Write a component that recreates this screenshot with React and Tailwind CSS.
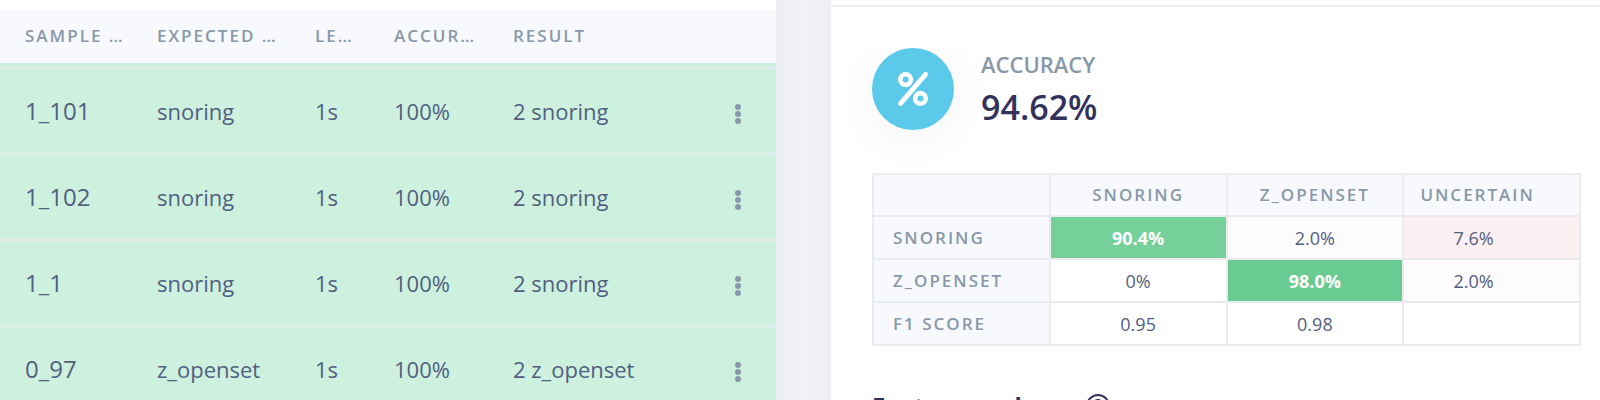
const samples = [
  { name: '1_101', expected: 'snoring', length: '1s', accuracy: '100%', result: '2 snoring' },
  { name: '1_102', expected: 'snoring', length: '1s', accuracy: '100%', result: '2 snoring' },
  { name: '1_1', expected: 'snoring', length: '1s', accuracy: '100%', result: '2 snoring' },
  { name: '0_97', expected: 'z_openset', length: '1s', accuracy: '100%', result: '2 z_openset' },
];

const columns = ['SAMPLE …', 'EXPECTED …', 'LE…', 'ACCUR…', 'RESULT'];

const sampleCell = 'whitespace-nowrap border-t-2 border-[#e5ebec] p-0 pl-[25px]';

function SampleTable() {
  return (
    <table className="w-full table-fixed border-separate border-spacing-0 text-left">
      <colgroup>
        <col className="w-[132px]" />
        <col className="w-[158px]" />
        <col className="w-[79px]" />
        <col className="w-[119px]" />
        <col />
        <col className="w-[100px]" />
      </colgroup>
      <thead>
        <tr className="h-[53px] bg-[#f7f9fd] text-[17px] font-semibold tracking-[2px] text-[#8898aa]">
          {columns.map((c) => (
            <th key={c} scope="col" className="whitespace-nowrap p-0 pb-0.5 pl-[25px] font-semibold">
              {c}
            </th>
          ))}
          <td className="p-0" />
        </tr>
      </thead>
      <tbody className="bg-[#cdf0df] text-[22px] text-[#525f7f]">
        <tr className="h-1 bg-[#caf1dd]">
          <td colSpan={6} className="p-0" />
        </tr>
        {samples.map((s) => (
          <tr key={s.name} className="h-[86px]">
            <td className={`${sampleCell} text-2xl`}>{s.name}</td>
            <td className={sampleCell}>{s.expected}</td>
            <td className={sampleCell}>{s.length}</td>
            <td className={sampleCell}>{s.accuracy}</td>
            <td className={sampleCell}>{s.result}</td>
            <td className="border-t-2 border-[#e5ebec] p-0 pr-7 align-middle">
              <button type="button" aria-label="Actions" className="ml-auto flex w-5 justify-center pt-1.5">
                <svg width="6" height="20" viewBox="0 0 6 20" fill="#8898aa">
                  <circle cx="3" cy="3" r="3" />
                  <circle cx="3" cy="10" r="3" />
                  <circle cx="3" cy="17" r="3" />
                </svg>
              </button>
            </td>
          </tr>
        ))}
      </tbody>
    </table>
  );
}

const cell = 'h-[43px] border-2 border-[#e9ecef] p-0 text-center';
const head = 'border-2 border-[#e9ecef] bg-[#f7f9fd] p-0 text-[17px] font-semibold tracking-[2px] text-[#8898aa]';

function ConfusionMatrix() {
  return (
    <table className="w-full table-fixed border-collapse text-lg leading-6 text-[#525f7f]">
      <thead>
        <tr className="h-[42px]">
          <td className={head} />
          <th scope="col" className={head}>SNORING</th>
          <th scope="col" className={head}>Z_OPENSET</th>
          <th scope="col" className={`${head} pr-7`}>UNCERTAIN</th>
        </tr>
      </thead>
      <tbody>
        <tr>
          <th scope="row" className={`${head} pl-[19px] text-left`}>SNORING</th>
          <td className={`${cell} bg-[#76d09a] font-bold text-white`}>90.4%</td>
          <td className={`${cell} bg-[#fefbfc]`}>2.0%</td>
          <td className={`${cell} bg-[#fdf0f2] pr-9`}>7.6%</td>
        </tr>
        <tr>
          <th scope="row" className={`${head} pl-[19px] text-left`}>Z_OPENSET</th>
          <td className={cell}>0%</td>
          <td className={`${cell} bg-[#69cb92] font-bold text-white`}>98.0%</td>
          <td className={`${cell} bg-[#fefbfc] pr-9`}>2.0%</td>
        </tr>
        <tr>
          <th scope="row" className={`${head} pl-[19px] text-left`}>F1 SCORE</th>
          <td className={cell}>0.95</td>
          <td className={cell}>0.98</td>
          <td className={cell} />
        </tr>
      </tbody>
    </table>
  );
}

export default function App() {
  return (
    <div className="flex h-screen overflow-hidden bg-[#f0f2f7] font-['Open_Sans',sans-serif]">
      <section className="w-[48.5%] bg-white pt-[10px]">
        <SampleTable />
      </section>
      <div className="w-[55px] shrink-0 bg-linear-to-r from-[#eeeff4] via-[#f0f2f8] to-[#eeeff4]" />
      <section className="min-w-0 flex-1 bg-white pt-[5px]">
        <div className="border-t-2 border-[#ededf2] pl-[41px] pr-[19px] pt-[41px]">
          <div className="-ml-[26px] flex gap-[27px] overflow-hidden pb-[39px] pl-[26px]">
            <div className="flex size-[82px] shrink-0 items-center justify-center rounded-full bg-[#5bc9ea] shadow-[0_8px_48px_rgba(0,0,0,0.05)]">
              <svg width="32" height="36" viewBox="0 0 32 36" fill="none" stroke="#fff" strokeLinecap="round">
                <circle cx="8.6" cy="8.6" r="5.3" strokeWidth="4.6" />
                <circle cx="23.4" cy="27.4" r="5.3" strokeWidth="4.6" />
                <path d="M28.6 3.4 3.4 32.6" strokeWidth="4.8" />
              </svg>
            </div>
            <div>
              <div className="text-[22px] font-semibold leading-8 text-[#8898aa]">ACCURACY</div>
              <div className="text-[34px] font-semibold leading-[54px] text-[#32325d]">94.62%</div>
            </div>
          </div>
          <ConfusionMatrix />
          <div className="flex items-center gap-[13px] pt-11 text-[#32325d]">
            <h2 className="text-2xl font-bold">Feature explorer</h2>
            <button type="button" aria-label="Help">
              <svg width="24" height="24" viewBox="0 0 24 24" fill="none" stroke="currentColor" strokeWidth="2">
                <circle cx="12" cy="12" r="11" />
                <path d="M8.5 9.5a3.5 3.5 0 1 1 5 3.2c-1 .5-1.5 1-1.5 2.3M12 17v2" />
              </svg>
            </button>
          </div>
        </div>
      </section>
    </div>
  );
}
